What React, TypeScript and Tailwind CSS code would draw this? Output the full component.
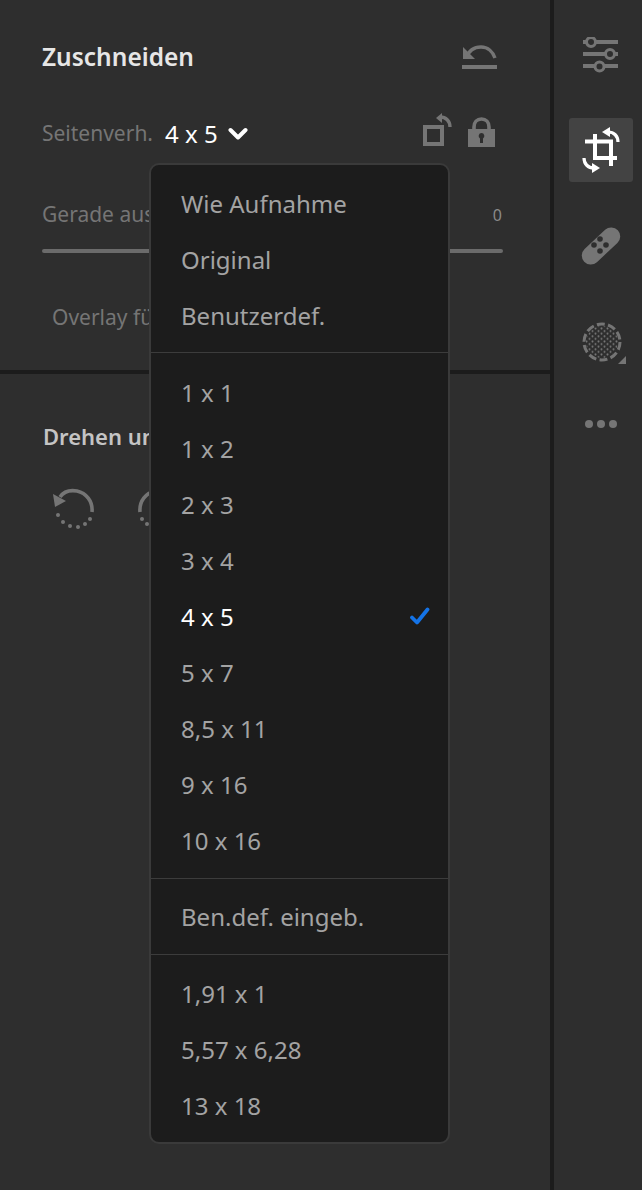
import React from "react";

const F = "font-['Noto_Sans','Open_Sans',sans-serif]";

function Item({ label, checked }: { label: string; checked?: boolean }) {
  return (
    <div className={`flex h-14 items-center justify-between pl-[30px] pr-[18px] text-[24px] ${checked ? "text-white" : "text-[#a3a3a3]"}`}>
      <span>{label}</span>
      {checked && (
        <svg width="20" height="20" viewBox="0 0 20 20" fill="none" stroke="#1473e6" strokeWidth="3.8" strokeLinecap="round" strokeLinejoin="round">
          <path d="M2 10.5 L7 15.5 L17.5 2.5" />
        </svg>
      )}
    </div>
  );
}

export default function App() {
  return (
    <div className={`relative flex h-[1190px] w-[642px] overflow-hidden bg-[#2e2e2e] ${F}`}>
      <div className="flex w-[550px] flex-col">
        <div className="h-[370px] pl-[42px] pr-[47px] pt-[40px]">
          <div className="flex h-[34px] items-center justify-between">
            <span className="text-[24.5px] font-semibold text-[#e6e6e6]">Zuschneiden</span>
            <svg width="36" height="26" viewBox="0 0 36 26" fill="none" className="mr-[5px]">
              <path d="M4 14 C7 6 13 3 19 3 C26 3 31 8 33 14" stroke="#757575" strokeWidth="3.4" />
              <path d="M1 3 L1 15 L13 15 Z" fill="#757575" />
              <rect x="0" y="21" width="35" height="4" fill="#757575" />
            </svg>
          </div>
          <div className="mt-[43px] flex h-[34px] items-center">
            <span className="text-[21px] text-[#757575]">Seitenverh.</span>
            <span className="ml-[12px] text-[24px] text-white">4 x 5</span>
            <svg width="20" height="14" viewBox="0 0 20 14" fill="none" stroke="#fff" strokeWidth="4" strokeLinecap="round" strokeLinejoin="round" className="ml-[10px]">
              <path d="M2.5 3 L10 10.5 L17.5 3" />
            </svg>
            <div className="ml-auto mr-[8px] -mt-[9px] flex items-end gap-[16px]">
              <svg width="29" height="35" viewBox="0 0 29 35" fill="none">
                <rect x="2" y="15" width="17" height="17" stroke="#757575" strokeWidth="4" />
                <path d="M13 6 L19 1 L19 11 Z" fill="#757575" />
                <path d="M17 5 C23 5 27 9 27 15" stroke="#757575" strokeWidth="3.4" />
              </svg>
              <svg width="27" height="30" viewBox="0 0 27 30" fill="none">
                <path d="M6 13 V10 C6 5.5 9 2 13.5 2 C18 2 21 5.5 21 10 V13" stroke="#757575" strokeWidth="3.6" />
                <path fillRule="evenodd" clipRule="evenodd" d="M0 12 H27 V30 H0 Z M13.5 16 A3 3 0 0 0 12 21.5 V26 H15 V21.5 A3 3 0 0 0 13.5 16 Z" fill="#757575" />
              </svg>
            </div>
          </div>
          <div className="mt-[47px] flex h-[34px] items-center justify-between">
            <span className="text-[21px] text-[#757575]">Gerade ausrichten</span>
            <span className="pr-[1px] text-[16px] text-[#8a8a8a]">0</span>
          </div>
          <div className="mt-[17px] h-1 w-[461px] rounded-full bg-[#6b6b6b]" />
          <div className="mt-[47px] pl-[10px] text-[21px] leading-[34px] text-[#757575]">Overlay für Zuschneiden</div>
        </div>
        <div className="h-1 bg-[#1c1c1c]" />
        <div className="pl-[43px] pt-[45px]">
          <div className="text-[22px] font-semibold leading-[34px] text-[#c4c4c4]">Drehen und spiegeln</div>
          <div className="ml-[9px] mt-[35px] flex gap-[40px]">
            <RotateIcon />
            <RotateIcon mirrored />
          </div>
        </div>
      </div>
      <div className="h-full w-1 bg-[#1c1c1c]" />
      <div className="flex flex-1 flex-col items-center pt-[37px]">
        <svg width="35" height="36" viewBox="0 0 35 36" fill="none" className="ml-[4px]">
          <g fill="#757575"><rect x="0" y="3" width="35" height="4" /><rect x="0" y="15" width="35" height="4" /><rect x="0" y="27" width="35" height="4" /></g>
          <g fill="#2e2e2e" stroke="#757575" strokeWidth="3"><circle cx="8" cy="5" r="4.5" /><circle cx="27" cy="17" r="4.5" /><circle cx="16.5" cy="29.5" r="4.5" /></g>
        </svg>
        <div className="ml-[6px] mt-[45px] flex h-16 w-16 items-center justify-center rounded-[3px] bg-[#434343]">
          <svg width="38" height="46" viewBox="0 0 38 46" fill="none">
            <g stroke="#fff" strokeWidth="4">
              <path d="M3 14.5 H29 V39" />
              <path d="M13 7 V31 H35" />
            </g>
            <path d="M20 5 L28 0 L28 10 Z" fill="#fff" />
            <path d="M26 5 C32 5 36 9 36 15" stroke="#fff" strokeWidth="3.2" />
            <path d="M18 41 L10 36 L10 46 Z" fill="#fff" />
            <path d="M12 41 C6 41 2 37 2 31" stroke="#fff" strokeWidth="3.2" />
          </svg>
        </div>
        <svg width="40" height="40" viewBox="0 0 40 40" className="ml-[6px] mt-[44px]">
          <rect x="-3" y="11" width="46" height="18" rx="9" ry="9" transform="rotate(-43 20 20)" fill="#757575" />
          <g fill="#2e2e2e"><circle cx="19" cy="13" r="2.8" /><circle cx="13" cy="19" r="2.8" /><circle cx="25" cy="19" r="2.8" /><circle cx="19" cy="25" r="2.8" /></g>
        </svg>
        <svg width="44" height="48" viewBox="0 0 44 48" className="ml-[12px] mt-[56px]">
          <defs>
            <pattern id="dots" width="6" height="5.2" patternUnits="userSpaceOnUse">
              <circle cx="1.5" cy="1.3" r="1" fill="#757575" /><circle cx="4.5" cy="3.9" r="1" fill="#757575" />
            </pattern>
          </defs>
          <circle cx="20" cy="20" r="16" fill="url(#dots)" />
          <circle cx="20" cy="20" r="18" fill="none" stroke="#757575" strokeWidth="3" strokeDasharray="8 3.3" />
          <path d="M44 34 V42 H36 Z" fill="#757575" />
        </svg>
        <div className="ml-[5px] mt-[50px] flex gap-1">
          <div className="h-2 w-2 rounded-full bg-[#757575]" />
          <div className="h-2 w-2 rounded-full bg-[#757575]" />
          <div className="h-2 w-2 rounded-full bg-[#757575]" />
        </div>
      </div>

      <div className="absolute left-[149px] top-[163px] w-[301px] rounded-[10px] border-2 border-[#3a3a3a] bg-[#1c1c1c] pb-[8px] pt-[11px]">
        <Item label="Wie Aufnahme" />
        <Item label="Original" />
        <Item label="Benutzerdef." />
        <div className="mb-3 mt-2 h-px bg-[#3c3c3c]" />
        {["1 x 1", "1 x 2", "2 x 3", "3 x 4"].map((l) => <Item key={l} label={l} />)}
        <Item label="4 x 5" checked />
        {["5 x 7", "8,5 x 11", "9 x 16", "10 x 16"].map((l) => <Item key={l} label={l} />)}
        <div className="mb-[10px] mt-[9px] h-px bg-[#3c3c3c]" />
        <Item label="Ben.def. eingeb." />
        <div className="mb-[11px] mt-[9px] h-px bg-[#3c3c3c]" />
        {["1,91 x 1", "5,57 x 6,28", "13 x 18"].map((l) => <Item key={l} label={l} />)}
      </div>
    </div>
  );
}

function RotateIcon({ mirrored }: { mirrored?: boolean }) {
  return (
    <svg width="44" height="44" viewBox="0 0 44 44" fill="none" className={mirrored ? "-scale-x-100" : ""}>
      <path d="M8 9 C12 3 19 2 25 3 C34 5 41 13 40 24" stroke="#757575" strokeWidth="3.6" />
      <path d="M1 6 L3 19 L14 13 Z" fill="#757575" />
      <g fill="#757575">
        <circle cx="6" cy="27" r="2" /><circle cx="11" cy="34" r="2" /><circle cx="18" cy="38" r="2" /><circle cx="26" cy="39" r="2" /><circle cx="33" cy="36" r="2" /><circle cx="38" cy="31" r="2" />
      </g>
    </svg>
  );
}
